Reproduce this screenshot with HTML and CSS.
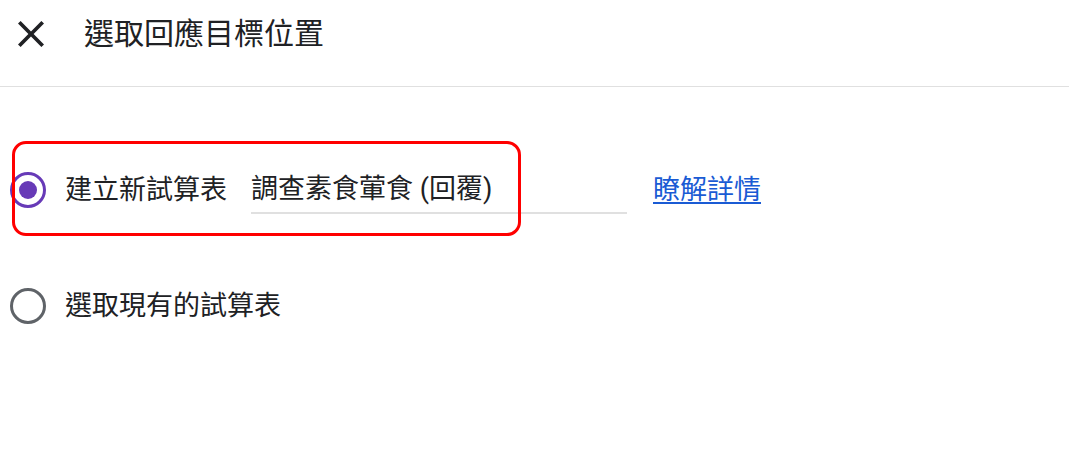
FILE: index.html
```html
<!DOCTYPE html>
<html lang="zh-Hant">
<head>
  <meta charset="UTF-8" />
  <title>選取回應目標位置</title>
  <link rel="stylesheet" href="styles.css">
</head>
<body>

  <header class="entete">
    <button class="btn-fermer" aria-label="關閉">
      <svg viewBox="5 5 14 14" width="26" height="26">
        <path d="M19 6.41L17.59 5 12 10.59 6.41 5 5 6.41 10.59 12 5 17.59 6.41 19 12 13.41 17.59 19 19 17.59 13.41 12z" fill="#202124"/>
      </svg>
    </button>
    <h1>選取回應目標位置</h1>
  </header>

  <main class="contenu">
    <div class="encadre"></div>

    <div class="ligne">
      <span class="radio coche"></span>
      <span class="libelle">建立新試算表</span>
      <input class="champ" type="text" value="調查素食葷食 (回覆)" />
      <a class="lien" href="#">瞭解詳情</a>
    </div>

    <div class="ligne ligne-2">
      <span class="radio"></span>
      <span class="libelle">選取現有的試算表</span>
    </div>
  </main>

</body>
</html>
```

FILE: styles.css
```css
/* Police Roboto + CJK */
body {
  font-family: Roboto, "Noto Sans CJK TC", sans-serif;
  background-color: #ffffff;
  color: #202124;
  margin: 0;
}

/* En-tête avec bouton fermer */
.entete {
  display: flex;
  align-items: center;
  height: 67px;
  padding: 0 0 19px 18px;
  border-bottom: 1px solid #e0e0e0;
}

.btn-fermer {
  width: 26px;
  height: 26px;
  padding: 0;
  border: none;
  background: none;
  display: flex;
  cursor: pointer;
}

h1 {
  margin: 0 0 0 40px;
  font-size: 30px;
  font-weight: 400;
  line-height: 36px;
}

/* Zone des choix */
.contenu {
  position: relative;
  padding: 79px 0 0 10px;
}

.ligne {
  display: flex;
  align-items: center;
  font-size: 27px;
  line-height: 36px;
}

.ligne-2 {
  margin-top: 74px;
}

/* Boutons radio */
.radio {
  width: 36px;
  height: 36px;
  box-sizing: border-box;
  border: 3px solid #5f6368;
  border-radius: 50%;
  display: flex;
  align-items: center;
  justify-content: center;
  flex-shrink: 0;
}
.radio.coche {
  border-color: #673ab7;
}
.radio.coche::after {
  content: "";
  width: 18px;
  height: 18px;
  border-radius: 50%;
  background-color: #673ab7;
}

.libelle {
  margin-left: 19px;
}

/* Champ du nom */
.champ {
  margin-left: 24px;
  width: 376px;
  padding: 5px 0;
  border: none;
  border-bottom: 2px solid #e0e0e0;
  font-family: inherit;
  font-size: 27px;
  line-height: 36px;
  color: #202124;
  outline: none;
}

.lien {
  margin-left: 26px;
  color: #1a5bd4;
  text-decoration: underline;
  text-underline-offset: 3px;
}

/* Cadre rouge d'annotation */
.encadre {
  position: absolute;
  left: 12px;
  top: 54px;
  width: 509px;
  height: 95px;
  box-sizing: border-box;
  border: 3px solid #ff0000;
  border-radius: 14px;
  pointer-events: none;
}
```
